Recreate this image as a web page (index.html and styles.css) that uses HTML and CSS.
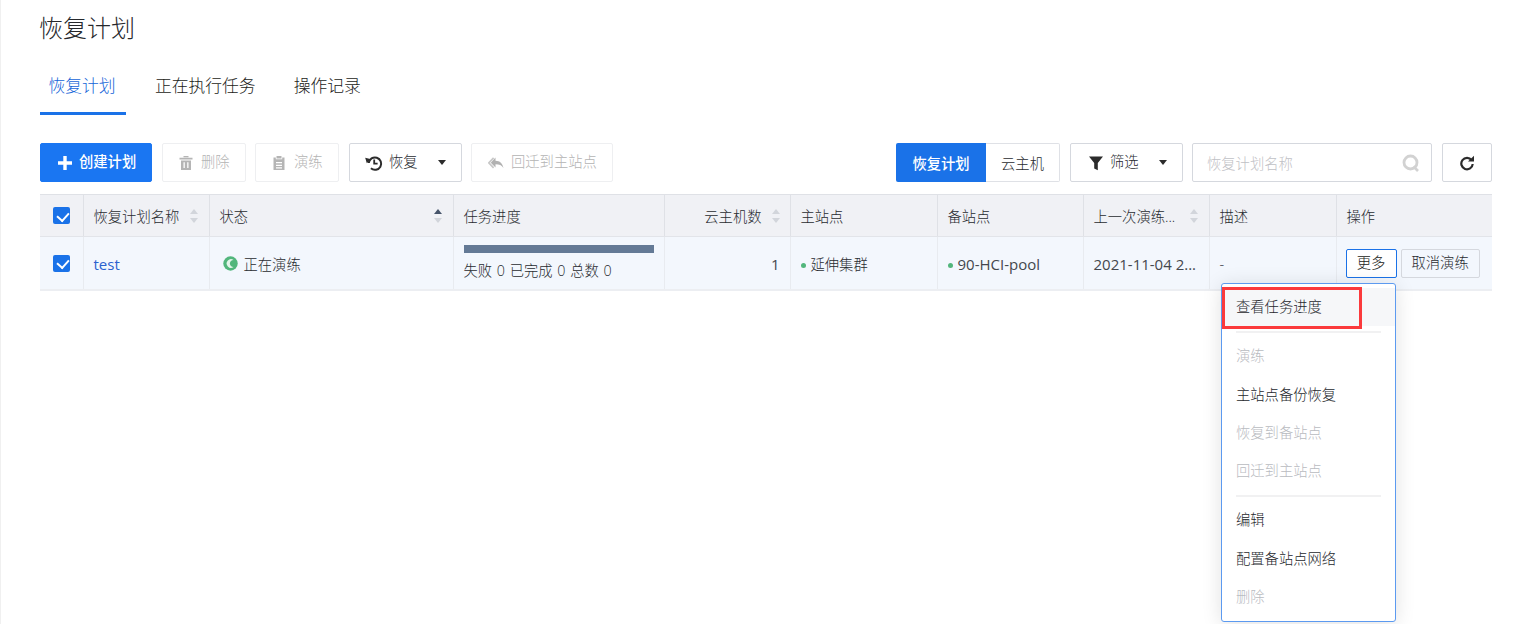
FILE: index.html
```html
<!DOCTYPE html>
<html lang="zh-CN">
<head>
<meta charset="utf-8">
<title>恢复计划</title>
<link rel="stylesheet" href="styles.css">
</head>
<body>
<div class="page">
  <h1 class="title">恢复计划</h1>
  <nav class="tabs">
    <a class="tab active">恢复计划</a>
    <a class="tab">正在执行任务</a>
    <a class="tab">操作记录</a>
  </nav>
  <div class="toolbar">
    <div class="tool-left">
      <button class="btn primary create"><svg class="ic" viewBox="0 0 16 16"><path d="M6.300 1h3.400v5.300H15v3.400H9.700V15H6.300V9.700H1V6.300h5.300z" fill="#fff"/></svg><span class="lbl">创建计划</span></button>
      <button class="btn disabled del"><svg class="ic" viewBox="0 0 16 16"><path d="M1.500 2.800h13v1.600h-13zM5.500 1h5v1.300h-5zM3 5.500h10V15H3zM5.500 7.300v5.800h1.300V7.300zM9.200 7.300v5.800h1.300V7.300z" fill="#b5b5b5" fill-rule="evenodd"/></svg><span class="lbl">删除</span></button>
      <button class="btn disabled drill"><svg class="ic" viewBox="0 0 16 16"><path d="M2.500 2.500h2.300V4.200h6.400V2.500h2.300V15h-11zM5.500 1h5v2.500h-5zM5 7v1.300h6V7zM5 9.700V11h6V9.700zM5 12.200v1.200h6v-1.200z" fill="#b5b5b5" fill-rule="evenodd"/></svg><span class="lbl">演练</span></button>
      <button class="btn outline restore"><svg class="ic-l" viewBox="0 0 18 18"><path d="M3.800 9a6.200 6.200 0 1 1 2.100 5.300" fill="none" stroke="#2b2b2b" stroke-width="2"/><path d="M.2 3.800l6 1.400-4.400 4z" fill="#2b2b2b"/><path d="M9.200 5.400v4.200h3.400" fill="none" stroke="#2b2b2b" stroke-width="1.800"/></svg><span class="lbl grow">恢复</span><i class="caret"></i></button>
      <button class="btn disabled back"><svg class="ic" viewBox="0 0 16 16"><path d="M7.500 2.500v3.300c4.500 0 7 2.800 8 7.200-2-2.800-4-3.700-8-3.700v3.300L2.800 7.800z" fill="#b2b2b2"/><path d="M5.600 2.800L.8 7.800l4.800 5" fill="none" stroke="#c8c8c8" stroke-width="1.700"/></svg><span class="lbl">回迁到主站点</span></button>
    </div>
    <div class="tool-right">
      <div class="segment"><span class="seg on">恢复计划</span><span class="seg">云主机</span></div>
      <button class="btn outline filter"><svg class="ic" viewBox="0 0 16 16"><path d="M1 1.500h14L9.800 8v7.200l-3.600-1.800V8z" fill="#2b2b2b"/></svg><span class="lbl grow">筛选</span><i class="caret"></i></button>
      <div class="search"><span class="placeholder">恢复计划名称</span><svg class="search-ic" viewBox="0 0 18 18"><circle cx="8.500" cy="8.500" r="6.500" fill="none" stroke="#d2d2d2" stroke-width="2.800"/><path d="M11.500 12.500l4.500 4.500" stroke="#d2d2d2" stroke-width="2.600"/></svg></div>
      <button class="btn outline refresh"><svg class="ic-r" viewBox="0 0 16 16"><path d="M12.600 5.200A5.700 5.700 0 1 0 13.700 9" fill="none" stroke="#2b2b2b" stroke-width="2.200"/><path d="M9 6.500h6V.8z" fill="#2b2b2b"/></svg></button>
    </div>
  </div>

  <div class="table-wrap">
    <table class="grid">
      <colgroup>
        <col class="c1"><col class="c2"><col class="c3"><col class="c4"><col class="c5"><col class="c6"><col class="c7"><col class="c8"><col class="c9"><col class="c10">
      </colgroup>
      <thead>
        <tr>
          <th class="check"><span class="cb"></span></th>
          <th><div class="th-in"><span>恢复计划名称</span><i class="sort"></i></div></th>
          <th><div class="th-in"><span>状态</span><i class="sort up"></i></div></th>
          <th>任务进度</th>
          <th><div class="th-in end"><span>云主机数</span><i class="sort"></i></div></th>
          <th>主站点</th>
          <th>备站点</th>
          <th><div class="th-in"><span>上一次演练...</span><i class="sort"></i></div></th>
          <th>描述</th>
          <th>操作</th>
        </tr>
      </thead>
      <tbody>
        <tr>
          <td class="check"><span class="cb"></span></td>
          <td><a class="link lat">test</a></td>
          <td><span class="status"><svg class="st-ic" viewBox="0 0 16 16"><circle cx="8" cy="8" r="7.700" fill="#52b67c"/><path d="M11.300 4.300a4.600 4.600 0 1 0 0 7.400 4.200 4.200 0 0 1-4-3.700 4.200 4.200 0 0 1 4-3.700z" fill="#e4f5ea"/></svg>正在演练</span></td>
          <td class="progress-cell"><div class="bar"></div><div class="counts">失败 0 已完成 0 总数 0</div></td>
          <td class="num lat">1</td>
          <td><i class="dot"></i>延伸集群</td>
          <td><i class="dot"></i><span class="lat">90-HCI-pool</span></td>
          <td><span class="lat">2021-11-04 2...</span></td>
          <td>-</td>
          <td class="ops"><button class="mini focus">更多</button><button class="mini">取消演练</button></td>
        </tr>
      </tbody>
    </table>
    <div class="menu">
      <div class="item hover">查看任务进度</div>
      <div class="sep first"></div>
      <div class="item off">演练</div>
      <div class="item">主站点备份恢复</div>
      <div class="item off">恢复到备站点</div>
      <div class="item off">回迁到主站点</div>
      <div class="sep"></div>
      <div class="item">编辑</div>
      <div class="item">配置备站点网络</div>
      <div class="item off">删除</div>
      <div class="mark"></div>
    </div>
  </div>
</div>
</body>
</html>
```
FILE: styles.css
```css
* { box-sizing: border-box; }
html, body { margin: 0; height: 100%; overflow: hidden; background: #fff; }
body {
  font-family: "Open Sans", "Noto Sans CJK SC", sans-serif;
  font-size: 14.3px;
  font-weight: 300;
  color: #282b30;
  border-left: 1px solid #f0f0f0;
}
.page { padding: 0 23px 0 39px; }
.title { margin: 0 0 0 -1px; padding-top: 11px; height: 56px; font-size: 24px; line-height: 34px; font-weight: 300; color: #26282c; }
.tabs { display: flex; height: 59px; }
.tab { height: 59px; padding: 12px 9px 0; font-size: 16.800px; line-height: 36px; color: #1b1c20; margin-right: 20px; border-bottom: 3px solid transparent; }
.tab.active { color: #1565d8; border-bottom-color: #1a72e8; padding: 12px 10.300px 0 8.500px; }
.toolbar { display: flex; justify-content: space-between; margin-top: 28px; height: 39px; }
.tool-left, .tool-right { display: flex; }
.btn { display: flex; align-items: center; height: 39px; padding: 0; font: inherit; background: #fff; border: 1px solid #d5d8de; border-radius: 2px; color: #282b30; }
.lbl { padding-bottom: 4px; }
.ic { width: 16px; height: 16px; flex: none; }
.ic-l { width: 18px; height: 18px; flex: none; }
.primary { background: #1a76f2; border-color: #1a76f2; color: #fff; font-weight: 500; }
.create { width: 112px; padding-left: 16px; gap: 6px; margin-right: 10px; }
.disabled { color: #b4b4b4; border-color: #eeeff1; }
.del { width: 84px; padding-left: 15px; gap: 7px; margin-right: 9px; }
.drill { width: 84px; padding-left: 15px; gap: 7px; margin-right: 10px; }
.restore { width: 113px; padding-left: 15px; padding-right: 15px; gap: 6px; margin-right: 9px; }
.back { width: 142px; padding-left: 16px; gap: 7px; }
.grow { flex: 1; text-align: left; }
.caret { width: 0; height: 0; border-left: 4.500px solid transparent; border-right: 4.500px solid transparent; border-top: 5px solid #2b2b2b; }
.segment { display: flex; width: 164px; height: 39px; margin-right: 10px; }
.seg { flex: 1; display: flex; align-items: center; justify-content: center; border: 1px solid #dfe1e6; border-left: 0; border-radius: 0 2px 2px 0; color: #282b30; }
.seg.on { flex: 0 0 90px; background: #1a72e8; color: #fff; border: 0; border-radius: 2px 0 0 2px; font-weight: 500; }
.filter { width: 113px; padding: 0 15px 0 17px; gap: 6px; margin-right: 9px; }
.search { display: flex; align-items: center; justify-content: space-between; width: 240px; height: 39px; padding: 0 11px 0 14px; border: 1px solid #d5d8de; border-radius: 2px; margin-right: 10px; }
.placeholder { color: #bfc1c5; }
.search-ic { width: 18px; height: 18px; }
.refresh { width: 50px; justify-content: center; }
.ic-r { width: 16px; height: 16px; }
.table-wrap { position: relative; margin-top: 12px; }
.grid { width: 1452px; table-layout: fixed; border-collapse: collapse; }
.c1 { width: 43px; } .c2 { width: 126px; } .c3 { width: 244px; } .c4 { width: 211px; } .c5 { width: 126px; }
.c6 { width: 147px; } .c7 { width: 146px; } .c8 { width: 126px; } .c9 { width: 127px; } .c10 { width: 156px; }
th { height: 42px; padding: 0 10px; text-align: left; font-weight: 300; background: #f0f1f5; border-top: 1px solid #dfe1e6; border-bottom: 1px solid #e2e4e9; border-left: 1px solid #dfe1e6; color: #282b30; white-space: nowrap; }
th:first-child, td:first-child { border-left: 0; }
td { height: 53px; padding: 2px 10px 0; background: #f3f7fd; border-bottom: 2px solid #eceef2; border-left: 1px solid #e8ebf0; white-space: nowrap; overflow: hidden; color: #282b30; }
.check { padding: 1px 0 0 13px; }
th.check { padding: 0 0 0 13px; }
.cb { display: block; width: 17px; height: 17px; border-radius: 2px; background: #1a72e8; position: relative; }
.cb::after { content: ""; position: absolute; left: 5.500px; top: 2.500px; width: 6px; height: 9px; border: solid #fff; border-width: 0 2.200px 2.200px 0; transform: rotate(42deg); }
.th-in { display: flex; align-items: center; justify-content: space-between; }
.th-in.end { justify-content: flex-end; gap: 10px; margin-right: -1px; }
.sort { position: relative; display: block; flex: none; width: 9px; height: 16px; }
.sort::before, .sort::after { content: ""; position: absolute; left: 0; width: 0; height: 0; border-left: 4.500px solid transparent; border-right: 4.500px solid transparent; }
.sort::before { top: 1px; border-bottom: 5px solid #d2d5db; }
.sort::after { bottom: 1px; border-top: 5px solid #d2d5db; }
.sort.up::before { border-bottom-color: #46546a; }
.lat { font-size: 15px; font-weight: 400; color: #44474d; }
.link.lat { color: #2a62cf; }
.status { display: flex; align-items: center; gap: 6px; padding-left: 3px; }
.st-ic { width: 15px; height: 15px; }
.progress-cell { padding-top: 0; }
.bar { height: 8px; background: #647a96; width: 190px; margin-bottom: 9px; }
.counts { line-height: 18px; word-spacing: 1px; }
.num { text-align: right; }
.dot { display: inline-block; width: 5px; height: 5px; border-radius: 50%; background: #52b67c; margin-right: 5px; vertical-align: 2px; }
.ops { padding: 1px 0 0 9px; }
.mini { height: 29px; padding: 0 10px; font: inherit; line-height: 1; background: transparent; border: 1px solid #d5d8de; border-radius: 2px; color: #282b30; margin-right: 4px; }
.mini.focus { width: 51px; padding: 0; background: #fff; border-color: #1a72e8; color: #1b1c20; }
.menu { position: absolute; left: 1181px; top: 89px; width: 175px; height: 339px; padding-top: 4px; background: #fff; border: 1px solid #5c9af0; border-radius: 3px; box-shadow: 0 2px 20px rgba(0,0,0,.12); }
.item { height: 38.300px; line-height: 38px; padding-left: 14px; color: #26282d; }
.item.hover { background: #f6f7f9; }
.item.off { color: #b9bbbf; }
.sep { height: 2px; margin: 5px 14px 4px; background: #f1f1f2; }
.sep.first { margin: 5px 14px 4px; }
.mark { position: absolute; left: 0; top: 3px; width: 140px; height: 42px; border: 3px solid #fb3a3c; }
```
